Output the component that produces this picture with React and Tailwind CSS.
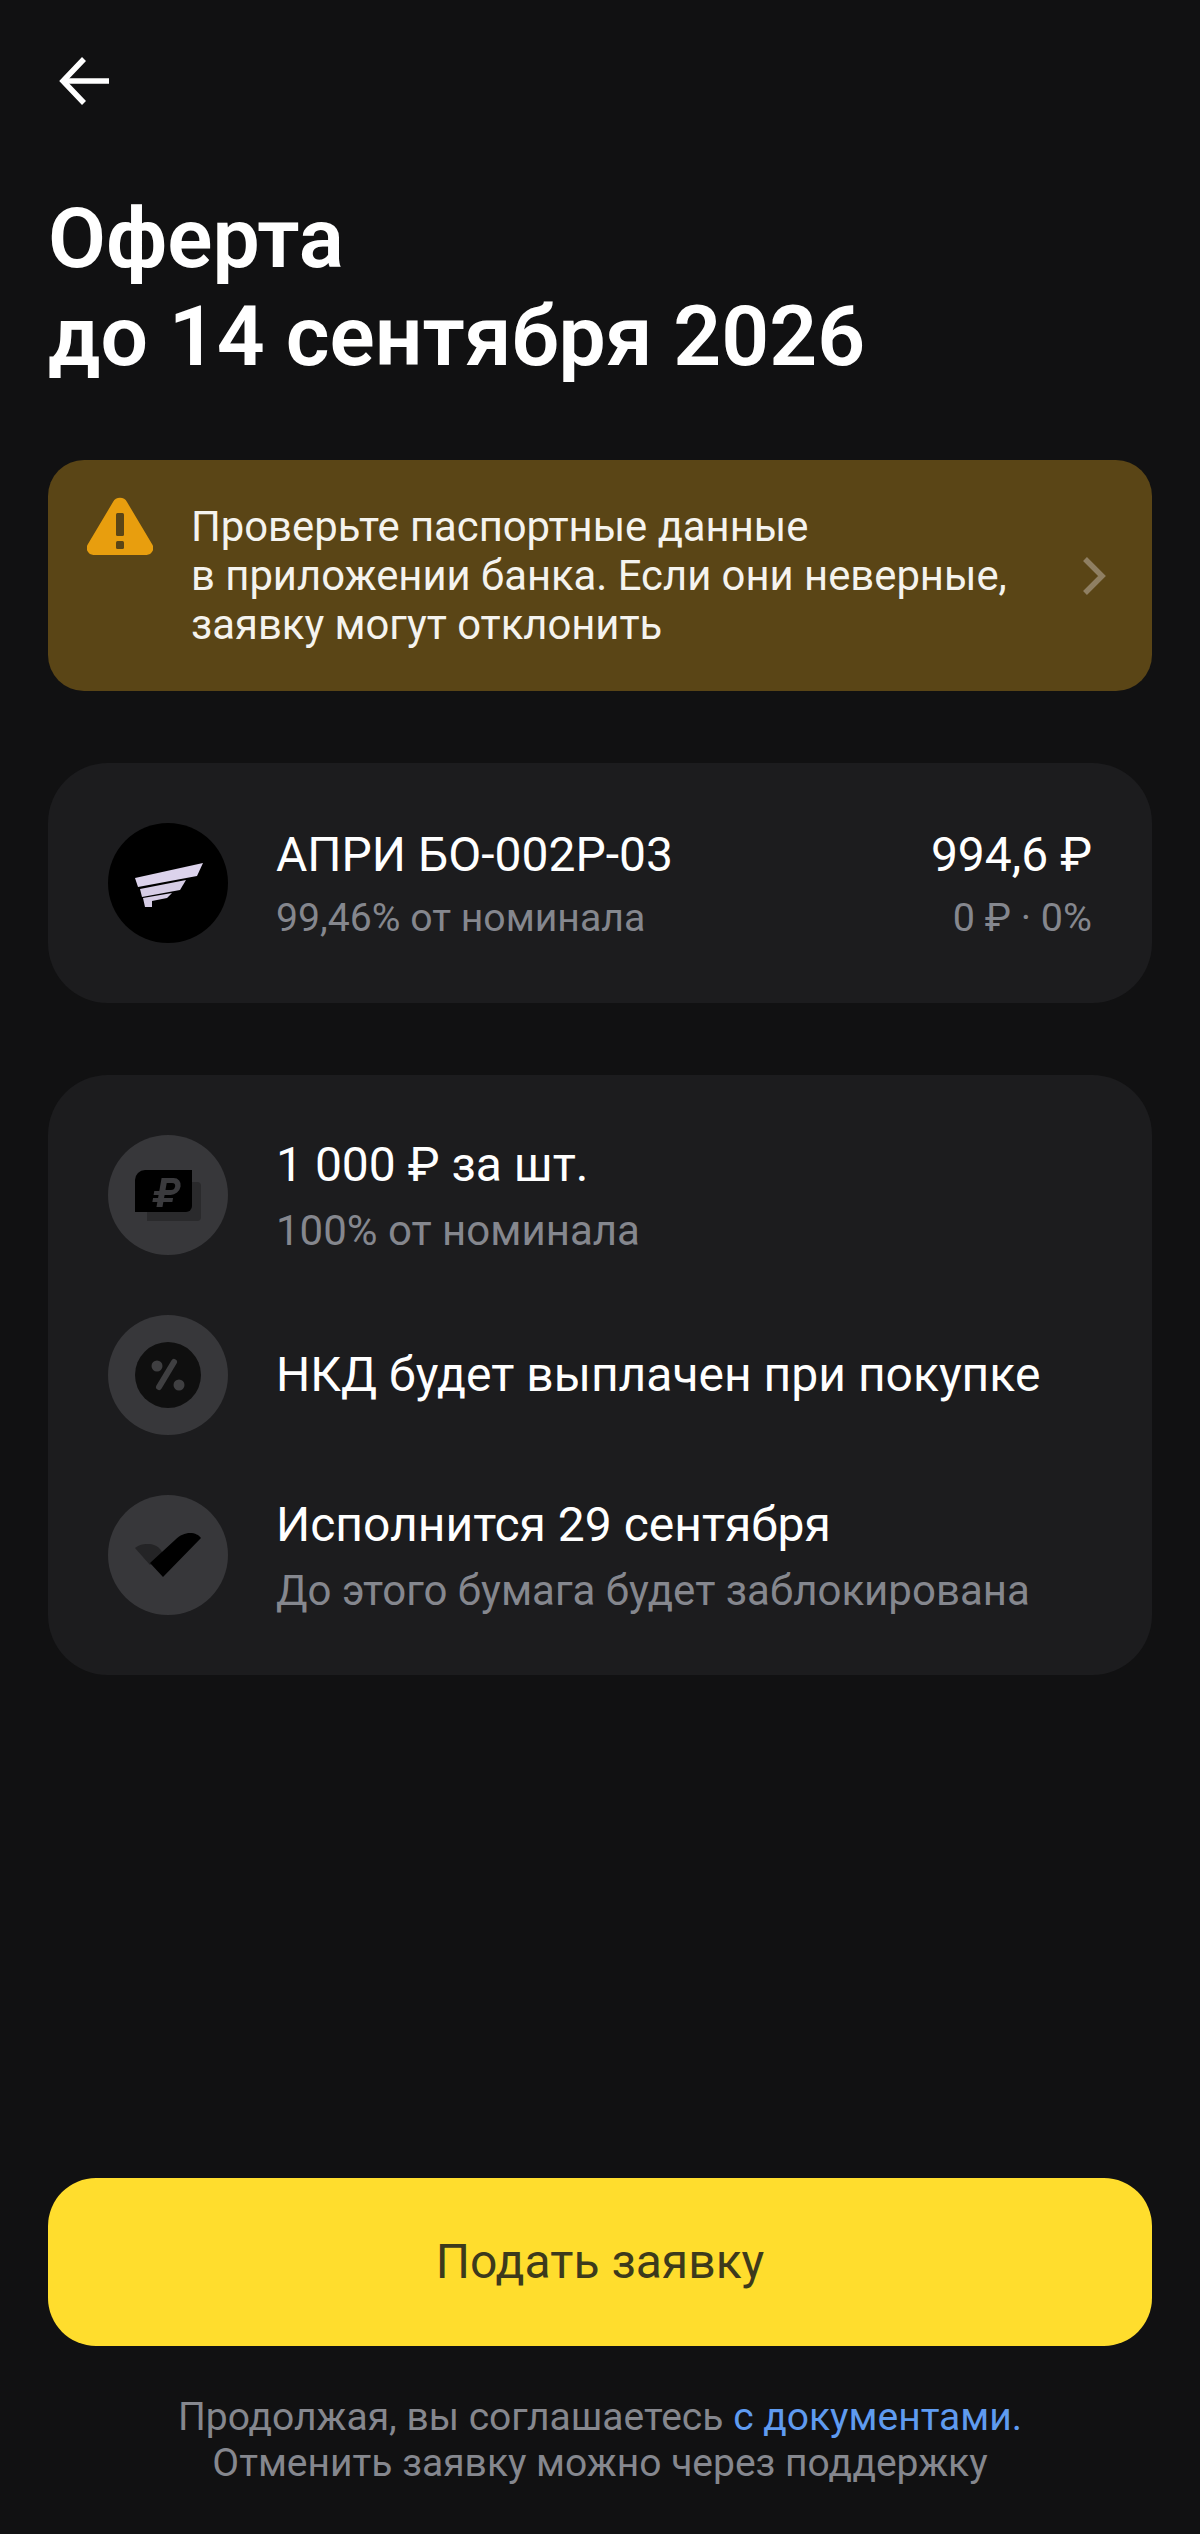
const FONT = "font-['Roboto','Noto_Sans',sans-serif]"

function BackArrow() {
  return (
    <svg width="50" height="48" viewBox="0 0 50 48" fill="none" stroke="white" strokeWidth="5.5">
      <path d="M50 24H4" />
      <path d="M25 2L4 24l21 22" />
    </svg>
  )
}

function WarningIcon() {
  return (
    <svg width="66" height="58" viewBox="0 0 66 58">
      <path
        d="M26 5a8 8 0 0 1 14 0l25 42a7 7 0 0 1-6 11H7a7 7 0 0 1-6-11z"
        fill="#e89e0e"
      />
      <rect x="29" y="16" width="8" height="23" rx="1.5" fill="#5a4516" />
      <rect x="29" y="44" width="8" height="8" rx="1.5" fill="#5a4516" />
    </svg>
  )
}

function Chevron() {
  return (
    <svg width="24" height="40" viewBox="0 0 24 40" fill="none" stroke="#8f7f62" strokeWidth="5.5">
      <path d="M3 3l17 17L3 37" />
    </svg>
  )
}

function WingLogo() {
  return (
    <div className="flex h-[120px] w-[120px] shrink-0 items-center justify-center rounded-full bg-black">
      <svg width="68" height="44" viewBox="0 0 68 44" className="translate-x-[1px] translate-y-[2px]">
        <path d="M0 15L68 0 62 13 3 24z" fill="#dcd3ec" />
        <path d="M5 26L51 17 45 27 7 34z" fill="#d6cde6" />
        <path d="M8 35L37 30 32 35 17 38 17 44 10 44z" fill="#d6cde6" />
      </svg>
    </div>
  )
}

function IconCircle({ children }) {
  return (
    <div className="flex h-[120px] w-[120px] shrink-0 items-center justify-center rounded-full bg-[#37373a]">
      {children}
    </div>
  )
}

function MoneyIcon() {
  return (
    <svg width="66" height="51" viewBox="0 0 66 51">
      <path d="M12 12h50a4 4 0 0 1 4 4v31a4 4 0 0 1-4 4H12z" fill="#2a2a2c" />
      <path d="M10 0h47v36a6 6 0 0 1-6 6H0V10A10 10 0 0 1 10 0z" fill="#000" />
      <g transform="translate(7 0) skewX(-10)">
        <path
          d="M21 8h12a8.500 8.500 0 0 1 0 17h-6v3h9v4h-9v5h-6v-5h-5v-4h5v-3h-5v-4h5z"
          fill="#3a3a3d"
        />
        <path d="M27 13h5.500a3.500 3.500 0 0 1 0 7H27z" fill="#000" />
      </g>
    </svg>
  )
}

function PercentIcon() {
  return (
    <svg width="66" height="66" viewBox="0 0 66 66">
      <circle cx="33" cy="33" r="33" fill="#0f0f0f" />
      <circle cx="22" cy="24" r="5.5" fill="#3f3f41" />
      <circle cx="44" cy="43" r="5.5" fill="#3f3f41" />
      <path d="M39 20L24 45" stroke="#3f3f41" strokeWidth="6" strokeLinecap="round" />
    </svg>
  )
}

function CheckIcon() {
  return (
    <svg width="66" height="44" viewBox="0 0 66 44">
      <path d="M0 15C5 11 9 11 14 11c7 0 13 5 14 11L15 32z" fill="#242426" />
      <path d="M15 30L40 7C45 2 50 0 55 0c5 0 9 2 11 5L28 44z" fill="#000" />
    </svg>
  )
}

function InfoRow({ icon, title, subtitle }) {
  return (
    <div className="flex items-center gap-[48px]">
      <IconCircle>{icon}</IconCircle>
      <div>
        <p className="text-[48px] leading-[60px] text-white">{title}</p>
        {subtitle && <p className="mt-[12px] text-[42px] leading-[48px] text-[#85878e]">{subtitle}</p>}
      </div>
    </div>
  )
}

export default function App() {
  return (
    <div className={`flex h-[2534px] w-[1200px] flex-col bg-[#111112] px-[48px] ${FONT}`}>
      <div className="ml-[11px] mt-[57px]">
        <BackArrow />
      </div>

      <h1 className="mt-[85px] text-[84px] font-semibold leading-[98px] text-white">
        Оферта
        <br />
        до 14 сентября 2026
      </h1>

      {/* Warning banner */}
      <div className="mt-[74px] flex h-[231px] items-center rounded-[36px] bg-[#5a4516] pl-[39px] pr-[46px]">
        <div className="self-start pt-[37px]">
          <WarningIcon />
        </div>
        <p className="ml-[38px] flex-1 text-[41.8px] leading-[49px] text-[#f5f3ee]">
          Проверьте паспортные данные
          <br />
          в приложении банка. Если они неверные,
          <br />
          заявку могут отклонить
        </p>
        <Chevron />
      </div>

      {/* Bond card */}
      <div className="mt-[72px] flex items-center gap-[48px] rounded-[60px] bg-[#1c1c1e] p-[60px]">
        <WingLogo />
        <div className="flex-1">
          <p className="text-[48px] leading-[60px] text-white">АПРИ БО-002Р-03</p>
          <p className="mt-[9px] text-[39.2px] leading-[48px] text-[#85878e]">99,46% от номинала</p>
        </div>
        <div className="text-right">
          <p className="text-[48px] leading-[60px] text-white">994,6 ₽</p>
          <p className="mt-[9px] text-[39.5px] leading-[48px] text-[#85878e]">0 ₽ · 0%</p>
        </div>
      </div>

      {/* Details card */}
      <div className="mt-[72px] flex flex-col gap-[60px] rounded-[60px] bg-[#1c1c1e] p-[60px]">
        <InfoRow icon={<MoneyIcon />} title="1 000 ₽ за шт." subtitle="100% от номинала" />
        <InfoRow icon={<PercentIcon />} title="НКД будет выплачен при покупке" />
        <InfoRow
          icon={<CheckIcon />}
          title="Исполнится 29 сентября"
          subtitle="До этого бумага будет заблокирована"
        />
      </div>

      <button className="mt-auto flex h-[168px] items-center justify-center rounded-[48px] bg-[#ffdd2d] text-[48px] text-[#3d3a1c]">
        Подать заявку
      </button>

      <p className="mb-[48px] mt-[48px] text-center text-[39px] leading-[46px] text-[#85878e]">
        Продолжая, вы соглашаетесь <span className="text-[#5f9bf0]">с документами.</span>
        <br />
        Отменить заявку можно через поддержку
      </p>
    </div>
  )
}
